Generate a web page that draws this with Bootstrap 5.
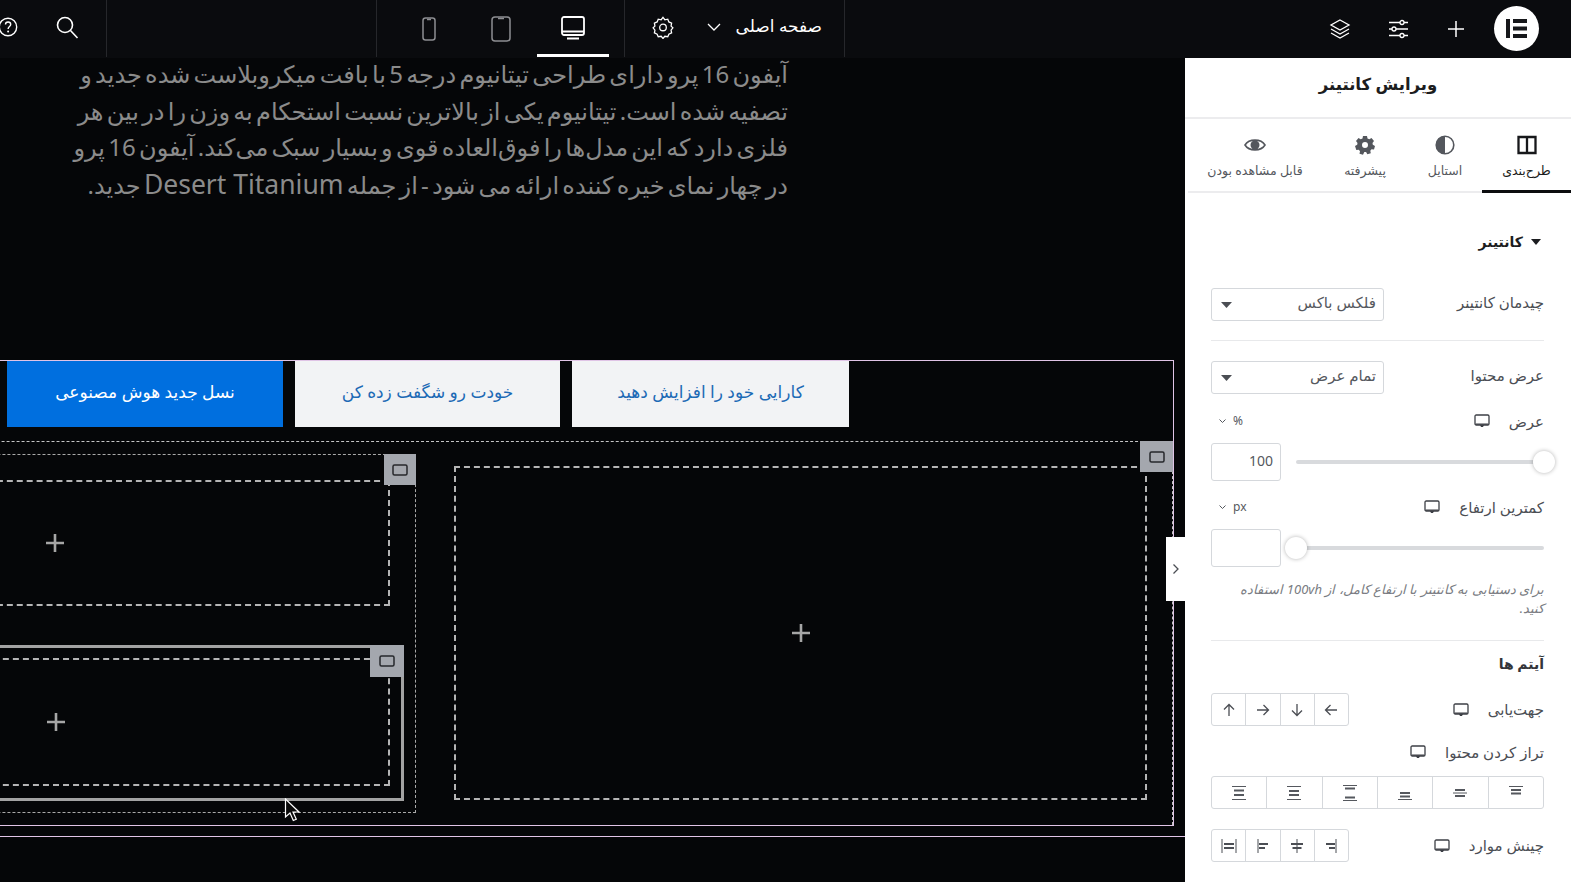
<!DOCTYPE html>
<html lang="fa">
<head>
<meta charset="UTF-8">
<title>ویرایش کانتینر</title>
<link href="https://cdn.jsdelivr.net/npm/bootstrap@5.3.0/dist/css/bootstrap.min.css" rel="stylesheet">
<style>
html, body { height: 882px; overflow: hidden; background: #050608; font-family: "Noto Sans", "DejaVu Sans", sans-serif; }
svg { display: block; }
.sym-defs { position: absolute; }
.top-bar { height: 58px; background: #0a0b0e; color: #fff; }
.top-cell { height: 57px; flex: none; border-right: 1px solid #26272b; }
.cell-tools { width: 107px; padding-bottom: 3px; }
.cell-help { margin-left: -2px; }
.cell-search { margin-left: 37px; }
.cell-gap { width: 270px; }
.cell-devices { width: 248px; padding-left: 16px; }
.cell-page { width: 220px; padding-right: 22px; padding-bottom: 3px; }
.cell-right { padding-right: 32px; padding-bottom: 1px; }
.icon-btn { flex: none; display: flex; align-items: center; justify-content: center; width: 72px; height: 57px; }
.icon-btn.is-on { border-bottom: 3px solid #fff; padding-top: 2px; }
.page-name { font-size: 17px; font-weight: 500; padding-bottom: 3px; }
.page-chev { margin-right: 15px; }
.page-gear { margin-right: 33px; }
.ico-sliders { margin-left: 37px; }
.ico-plus { margin-left: 38px; }
.logo-disc { width: 45px; height: 45px; margin-left: 29px; border-radius: 50%; background: #fff; }
.work-row { height: 824px; }
.canvas-area { position: relative; flex: 0 0 1185px; width: 1185px; overflow: hidden; background: #050608; }
.para-block { width: 788px; height: 304px; margin-top: -2px; color: #8b8b8b; font-size: 24px; line-height: 36.5px; word-spacing: -3px; text-align: right; white-space: nowrap; }
.latin-part { font-size: 26.5px; word-spacing: 0; }
.frame-wrap { margin-left: -299px; width: 1484px; padding-bottom: 10px; border-bottom: 1px solid #e0c4e6; }
.outer-frame { width: 1473px; height: 466px; border: 1px solid #e0c4e6; }
.btn-row { padding-left: 305px; height: 66px; gap: 12px; }
.cta { flex: none; height: 66px; padding-bottom: 10px; border: 0; border-radius: 0; font-size: 17px; background: #f2f3f5; color: #1c6ab5; }
.cta-blue { width: 276px; background: #006fdf; color: #fff; }
.cta-mid { width: 265px; }
.cta-end { width: 277px; }
.drop-row { position: relative; height: 384px; margin-top: 14px; border-top: 1px dashed #c5c5c5; border-right: 1px dashed #c5c5c5; }
.left-col { position: relative; flex: none; width: 714px; height: 359px; margin-top: 12px; padding: 25px 25px 0 16px; border: 1px dashed #a9a9a9; }
.drop-box { border: 2px dashed #b5b5b5; display: flex; align-items: center; justify-content: center; }
.box-a { height: 126px; }
.held-box { position: relative; height: 156px; margin-top: 39px; margin-right: -14px; margin-left: -14px; padding: 10px 11px 11px 14px; border: 3px solid #a3a3a3; border-left-color: transparent; }
.box-b { height: 128px; }
.box-main { flex: none; width: 693px; height: 334px; margin-top: 24px; margin-left: 38px; }
.grab { position: absolute; top: -1px; right: -1px; width: 32px; height: 31px; background: #a4a7ae; display: flex; align-items: center; justify-content: center; }
.grab-wide { width: 33px; }
.held-box .grab { top: -3px; right: -3px; height: 32px; width: 34px; }
.mouse-ptr { position: absolute; left: 284px; top: 740px; }
.side-tab { position: absolute; right: 0; top: 479px; width: 19px; height: 64px; background: #fff; display: flex; align-items: center; justify-content: center; }
.side-panel { flex: 0 0 386px; background: #fff; color: #4b4e54; font-size: 15px; }
.panel-head { height: 61px; padding-bottom: 6px; border-bottom: 2px solid #ececee; font-size: 16.5px; font-weight: 700; color: #1c1d20; }
.tab-row { height: 74px; margin-left: 3px; border-bottom: 2px solid #ececee; }
.tab-cell { height: 74px; display: flex; flex-direction: column; align-items: center; padding-top: 16px; font-size: 12.5px; color: #54575d; gap: 7px; }
.tab-cell.is-on { border-bottom: 3px solid #0c0d0f; color: #1c1d20; }
.tab-a { width: 89px; } .tab-b { width: 74px; } .tab-c { width: 86px; } .tab-d { width: 134px; }
.panel-body { padding: 0 27px 0 26px; }
.sec-title { height: 20px; line-height: 20px; margin-top: 39px; font-size: 14px; font-weight: 700; color: #1c1d20; gap: 8px; }
.caret-down { width: 0; height: 0; margin-right: 3px; border: 5px solid transparent; border-top: 6px solid #1c1d20; border-bottom: 0; }
.sel-box { width: 173px; height: 33px; padding: 0 7px 5px 24px; font-size: 15px; color: #55585e; border-radius: 3px; border-color: #d5d8dc; background-position: left 9px center; background-size: 11px 6px; background-image: url("data:image/svg+xml,%3Csvg xmlns='http://www.w3.org/2000/svg' viewBox='0 0 11 6'%3E%3Cpath fill='%234b4e54' d='M0 0h11L5.5 6z'/%3E%3C/svg%3E"); }
.field-row { height: 33px; }
.lift-text { padding-bottom: 5px; }
.with-mon { gap: 19px; }
.rule-line { border-top: 1px solid #e8e9eb; }
.mini-row { height: 20px; line-height: 20px; }
.unit-tag { margin-left: 8px; font-size: 12px; color: #55585e; gap: 7px; }
.slide-row { gap: 15px; }
.num-box { flex: none; width: 70px; height: 38px; padding: 0 7px 3px; border-radius: 3px; border-color: #d5d8dc; font-size: 14px; color: #55585e; }
.slide-track { position: relative; height: 4px; border-radius: 2px; background: #d8dadd; }
.slide-knob { position: absolute; top: -9px; width: 22px; height: 22px; border-radius: 50%; background: #fff; box-shadow: 0 0 4px rgba(0,0,0,.3); }
.knob-full { right: -11px; }
.knob-zero { left: -11px; }
.hint-text { height: 38px; margin-top: 13px; font-size: 13px; line-height: 19px; font-style: italic; color: #797c82; white-space: nowrap; }
.items-title { height: 20px; line-height: 20px; margin-top: 13px; font-size: 14px; font-weight: 700; color: #33353a; }
.seg-group { height: 33px; }
.seg-group .btn { display: flex; align-items: center; justify-content: center; padding: 0; background: #fff; border-color: #d5d8dc; --bs-btn-border-radius: 3px; }
.w-four { width: 138px; } .w-six { width: 333px; }
.mt-12 { margin-top: 12px; } .mt-14 { margin-top: 14px; } .mt-16 { margin-top: 16px; } .mt-17 { margin-top: 17px; } .mt-19 { margin-top: 19px; } .mt-20 { margin-top: 20px; } .mt-22 { margin-top: 22px; } .mt-36 { margin-top: 36px; }
</style>
</head>
<body>
<svg width="0" height="0" class="sym-defs">
  <symbol id="mon" viewBox="0 0 16 14"><path d="M2.2 1h11.6c.7 0 1.200.5 1.200 1.200v7.600c0 .7-.5 1.200-1.200 1.200H2.200C1.500 11 1 10.500 1 9.800V2.200C1 1.500 1.500 1 2.200 1z" fill="none" stroke="#3c3f45" stroke-width="1.300"/><path d="M1.500 9.500h13V10.800h-13zM6 11h4l-1 2H7z" fill="#3c3f45"/></symbol>
  <symbol id="plus" viewBox="0 0 18 18"><path d="M9 0v18M0 9h18" stroke="#a6a6a6" stroke-width="2.600"/></symbol>
  <symbol id="box-ico" viewBox="0 0 16 12"><rect x="1" y="1" width="14" height="10" rx="1.500" fill="none" stroke="#26282c" stroke-width="1.500"/></symbol>
</svg>

<div class="top-bar d-flex align-items-stretch">
  <div class="top-cell cell-tools d-flex align-items-center">
    <svg class="cell-help" width="20" height="22" viewBox="0 0 20 22"><circle cx="10" cy="11" r="8.700" fill="none" stroke="#fff" stroke-width="1.400"/><path d="M7.500 8.500c0-3.300 5.200-3.300 5.200 0 0 2.100-2.600 2-2.600 4.400" fill="none" stroke="#fff" stroke-width="1.400"/><circle cx="10.100" cy="15.500" r="1" fill="#fff"/></svg>
    <svg class="cell-search" width="24" height="24" viewBox="0 0 24 24"><circle cx="10" cy="10" r="7.500" fill="none" stroke="#fff" stroke-width="1.600"/><path d="M15.500 15.500l7 7.500" stroke="#fff" stroke-width="1.600"/></svg>
  </div>
  <div class="top-cell cell-gap"></div>
  <div class="top-cell cell-devices d-flex">
    <div class="icon-btn"><svg width="16" height="24" viewBox="0 0 16 24"><rect x="2" y="1" width="12" height="22" rx="2.500" fill="none" stroke="#8d8e92" stroke-width="1.500"/><path d="M6 2.500h4" stroke="#8d8e92" stroke-width="1.500"/></svg></div>
    <div class="icon-btn"><svg width="22" height="26" viewBox="0 0 22 26"><rect x="2" y="1" width="18" height="24" rx="3" fill="none" stroke="#8d8e92" stroke-width="1.500"/><path d="M8 2.500h6" stroke="#8d8e92" stroke-width="1.500"/></svg></div>
    <div class="icon-btn is-on"><svg width="24" height="24" viewBox="0 0 24 24"><rect x="1" y="1" width="22" height="18" rx="2" fill="none" stroke="#fff" stroke-width="1.800"/><path d="M1 15.500h22M6 22.500h12" stroke="#fff" stroke-width="1.800"/></svg></div>
  </div>
  <div class="top-cell cell-page d-flex align-items-center" dir="rtl">
    <span class="page-name">صفحه اصلی</span>
    <svg class="page-chev" width="14" height="8" viewBox="0 0 14 8"><path d="M1 1l6 6 6-6" fill="none" stroke="#fff" stroke-width="1.300"/></svg>
    <svg class="page-gear" width="22" height="24" viewBox="0 0 24 24"><path d="M12 1.500l2 2.600 3.200-.6 1.200 3 3 1.300-.6 3.200 2 2-2 2.500.6 3-3 1.300-1.200 2.800-3.200-.5-2 2.400-2-2.400-3.200.5-1.200-2.800-3-1.300.6-3-2-2.500 2-2-.6-3.200 3-1.300 1.200-3 3.200.6z" fill="none" stroke="#fff" stroke-width="1.400"/><circle cx="12" cy="12.500" r="3.600" fill="none" stroke="#fff" stroke-width="1.400"/></svg>
  </div>
  <div class="cell-right flex-grow-1 d-flex align-items-center justify-content-end">
    <svg width="22" height="22" viewBox="0 0 22 22"><path d="M11 2l9 5-9 5-9-5zM2 11l9 5 9-5M2 15l9 5 9-5" fill="none" stroke="#fff" stroke-width="1.300"/></svg>
    <svg class="ico-sliders" width="21" height="20" viewBox="0 0 21 20"><path d="M1 3.500h11M16 3.500h4M1 10h3M8 10h12M1 16.500h11M16 16.500h4" stroke="#fff" stroke-width="1.300" fill="none"/><circle cx="14" cy="3.500" r="2" fill="none" stroke="#fff" stroke-width="1.300"/><circle cx="6" cy="10" r="2" fill="none" stroke="#fff" stroke-width="1.300"/><circle cx="14" cy="16.500" r="2" fill="none" stroke="#fff" stroke-width="1.300"/></svg>
    <svg class="ico-plus" width="18" height="18" viewBox="0 0 18 18"><path d="M9 1v16M1 9h16" stroke="#fff" stroke-width="1.500"/></svg>
    <div class="logo-disc d-flex align-items-center justify-content-center">
      <svg width="21" height="19" viewBox="0 0 21 19"><path d="M0 0h4v19H0zM7 0h14v4H7zM7 7.500h14v4H7zM7 15h14v4H7z" fill="#17181b"/></svg>
    </div>
  </div>
</div>

<div class="work-row d-flex">
  <div class="canvas-area">
    <div class="para-block" dir="rtl">
      آیفون 16 پرو دارای طراحی تیتانیوم درجه 5 با بافت میکروبلاست شده جدید و<br>
      تصفیه شده است. تیتانیوم یکی از بالاترین نسبت استحکام به وزن را در بین هر<br>
      فلزی دارد که این مدل‌ها را فوق‌العاده قوی و بسیار سبک می‌کند. آیفون 16 پرو<br>
      در چهار نمای خیره کننده ارائه می شود - از جمله <span class="latin-part">Desert Titanium</span> جدید.
    </div>
    <div class="frame-wrap">
      <div class="outer-frame">
        <div class="btn-row d-flex">
          <button class="btn cta cta-blue">نسل جدید هوش مصنوعی</button>
          <button class="btn cta cta-mid">خودت رو شگفت زده کن</button>
          <button class="btn cta cta-end">کارایی خود را افزایش دهید</button>
        </div>
        <div class="drop-row d-flex align-items-start">
          <div class="left-col">
            <div class="drop-box box-a"><svg width="18" height="18"><use href="#plus"/></svg></div>
            <div class="grab"><svg width="16" height="12"><use href="#box-ico"/></svg></div>
            <div class="held-box">
              <div class="drop-box box-b"><svg width="18" height="18"><use href="#plus"/></svg></div>
              <div class="grab"><svg width="16" height="12"><use href="#box-ico"/></svg></div>
            </div>
          </div>
          <div class="drop-box box-main"><svg width="18" height="18"><use href="#plus"/></svg></div>
          <div class="grab grab-wide"><svg width="16" height="12"><use href="#box-ico"/></svg></div>
        </div>
      </div>
    </div>
    <svg class="mouse-ptr" width="17" height="24" viewBox="0 0 17 24"><path d="M1.500 1v18l4.500-4 3.300 7.500 3-1.300-3.300-7.200h6z" fill="#0a0a0a" stroke="#fff" stroke-width="1.200"/></svg>
    <div class="side-tab"><svg width="8" height="12" viewBox="0 0 8 12"><path d="M1.500 1.500L6 6l-4.500 4.500" fill="none" stroke="#4b4e54" stroke-width="1.300"/></svg></div>
  </div>

  <aside class="side-panel" dir="rtl">
    <div class="panel-head d-flex align-items-center justify-content-center">ویرایش کانتینر</div>
    <div class="tab-row d-flex">
      <div class="tab-cell tab-a is-on">
        <svg width="20" height="20" viewBox="0 0 20 20"><path d="M1.500 2h17v16h-17zM10 2v16" fill="none" stroke="#17181b" stroke-width="2.300"/></svg>
        <span>طرح‌بندی</span>
      </div>
      <div class="tab-cell tab-b">
        <svg width="20" height="20" viewBox="0 0 20 20"><circle cx="10" cy="10" r="8.800" fill="none" stroke="#54575d" stroke-width="1.600"/><path d="M10 1a9 9 0 0 0 0 18z" fill="#54575d"/></svg>
        <span>استایل</span>
      </div>
      <div class="tab-cell tab-c">
        <svg width="20" height="20" viewBox="0 0 20 20"><path fill="#54575d" fill-rule="evenodd" d="M8 1h4l.5 2.500 1.800.8L16.500 3 19 6l-1.500 2 .3 1.800L20 11l-1 3.500-2.500-.2-1.200 1.500.5 2.500-3.500 1-1.200-2.200H9.300L8 19.800l-3.500-1 .5-2.500-1.200-1.500-2.500.2L0 11l2.200-1.200L2.500 8 1 6l2.500-3 2.200 1.300 1.800-.8zM10 7a3 3 0 1 0 0 6 3 3 0 0 0 0-6z"/></svg>
        <span>پیشرفته</span>
      </div>
      <div class="tab-cell tab-d">
        <svg width="22" height="20" viewBox="0 0 22 20"><path d="M1 10c4-6.500 16-6.500 20 0-4 6.500-16 6.500-20 0z" fill="none" stroke="#54575d" stroke-width="1.600"/><circle cx="11" cy="10" r="4.500" fill="#54575d"/></svg>
        <span>قابل مشاهده بودن</span>
      </div>
    </div>

    <div class="panel-body">
      <div class="sec-title d-flex align-items-center"><span class="caret-down"></span><span>کانتینر</span></div>

      <div class="field-row d-flex align-items-center justify-content-between mt-36">
        <span class="lift-text">چیدمان کانتینر</span>
        <select class="form-select sel-box"><option>فلکس باکس</option></select>
      </div>
      <div class="rule-line mt-19"></div>

      <div class="field-row d-flex align-items-center justify-content-between mt-20">
        <span class="lift-text">عرض محتوا</span>
        <select class="form-select sel-box"><option>تمام عرض</option></select>
      </div>

      <div class="mini-row d-flex align-items-center justify-content-between mt-17">
        <span class="d-flex align-items-center with-mon">عرض <svg width="16" height="14"><use href="#mon"/></svg></span>
        <span class="unit-tag d-flex align-items-center"><span>%</span><svg width="7" height="5" viewBox="0 0 7 5"><path d="M.5.500l3 3 3-3" fill="none" stroke="#55585e"/></svg></span>
      </div>
      <div class="slide-row d-flex align-items-center mt-12">
        <div class="flex-grow-1"><div class="slide-track"><span class="slide-knob knob-full"></span></div></div>
        <input class="form-control num-box" value="100">
      </div>

      <div class="mini-row d-flex align-items-center justify-content-between mt-16">
        <span class="d-flex align-items-center with-mon">کمترین ارتفاع <svg width="16" height="14"><use href="#mon"/></svg></span>
        <span class="unit-tag d-flex align-items-center"><span>px</span><svg width="7" height="5" viewBox="0 0 7 5"><path d="M.5.500l3 3 3-3" fill="none" stroke="#55585e"/></svg></span>
      </div>
      <div class="slide-row d-flex align-items-center mt-12">
        <div class="flex-grow-1"><div class="slide-track"><span class="slide-knob knob-zero"></span></div></div>
        <input class="form-control num-box">
      </div>

      <div class="hint-text">برای دستیابی به کانتینر با ارتفاع کامل، از 100vh استفاده<br>کنید.</div>
      <div class="rule-line mt-22"></div>

      <div class="items-title">آیتم ها</div>

      <div class="field-row d-flex align-items-center justify-content-between mt-19">
        <span class="d-flex align-items-center with-mon">جهت‌یابی <svg width="16" height="14"><use href="#mon"/></svg></span>
        <div class="btn-group seg-group w-four" dir="ltr">
          <button class="btn"><svg width="14" height="14" viewBox="0 0 14 14"><path d="M7 13V1.500M2 6.500l5-5 5 5" fill="none" stroke="#4b4e54" stroke-width="1.300"/></svg></button>
          <button class="btn"><svg width="14" height="14" viewBox="0 0 14 14"><path d="M1 7h11.500M7.500 2l5 5-5 5" fill="none" stroke="#4b4e54" stroke-width="1.300"/></svg></button>
          <button class="btn"><svg width="14" height="14" viewBox="0 0 14 14"><path d="M7 1v11.500M2 7.500l5 5 5-5" fill="none" stroke="#4b4e54" stroke-width="1.300"/></svg></button>
          <button class="btn"><svg width="14" height="14" viewBox="0 0 14 14"><path d="M13 7H1.500M6.500 2l-5 5 5 5" fill="none" stroke="#4b4e54" stroke-width="1.300"/></svg></button>
        </div>
      </div>

      <div class="mini-row d-flex align-items-center mt-16">
        <span class="d-flex align-items-center with-mon">تراز کردن محتوا <svg width="16" height="14"><use href="#mon"/></svg></span>
      </div>
      <div class="btn-group seg-group w-six mt-14 d-flex" dir="ltr">
        <button class="btn flex-fill"><svg width="16" height="16" viewBox="0 0 16 16"><path d="M1 1.500h14M1 14.500h14" stroke="#55585e"/><path d="M3 5.500h10M3 10h10" stroke="#55585e" stroke-width="2"/></svg></button>
        <button class="btn flex-fill"><svg width="16" height="16" viewBox="0 0 16 16"><path d="M1 1.500h14M1 14.500h14" stroke="#55585e"/><path d="M3 6h10M3 10h10" stroke="#55585e" stroke-width="2"/></svg></button>
        <button class="btn flex-fill"><svg width="16" height="16" viewBox="0 0 16 16"><path d="M1 .5h14M1 15.500h14" stroke="#55585e"/><path d="M3 3.500h10M3 12.500h10" stroke="#55585e" stroke-width="2"/></svg></button>
        <button class="btn flex-fill"><svg width="16" height="16" viewBox="0 0 16 16"><path d="M1 14.500h14" stroke="#55585e"/><path d="M3 8h10M3 11.500h10" stroke="#55585e" stroke-width="2"/></svg></button>
        <button class="btn flex-fill"><svg width="16" height="16" viewBox="0 0 16 16"><path d="M1 8h14" stroke="#55585e"/><path d="M3 5h10M3 11h10" stroke="#55585e" stroke-width="2"/></svg></button>
        <button class="btn flex-fill"><svg width="16" height="16" viewBox="0 0 16 16"><path d="M1 1.500h14" stroke="#55585e"/><path d="M3 5h10M3 8.500h10" stroke="#55585e" stroke-width="2"/></svg></button>
      </div>

      <div class="field-row d-flex align-items-center justify-content-between mt-20">
        <span class="d-flex align-items-center with-mon">چینش موارد <svg width="16" height="14"><use href="#mon"/></svg></span>
        <div class="btn-group seg-group w-four" dir="ltr">
          <button class="btn"><svg width="16" height="16" viewBox="0 0 16 16"><path d="M1 1v14M15 1v14" stroke="#4b4e54"/><path d="M3 6h10M3 10h10" stroke="#4b4e54" stroke-width="2"/></svg></button>
          <button class="btn"><svg width="16" height="16" viewBox="0 0 16 16"><path d="M3 1v14" stroke="#4b4e54"/><path d="M4 6h9M4 10h6" stroke="#4b4e54" stroke-width="2"/></svg></button>
          <button class="btn"><svg width="16" height="16" viewBox="0 0 16 16"><path d="M8 1v14" stroke="#4b4e54"/><path d="M2 6h12M3.500 10h9" stroke="#4b4e54" stroke-width="2"/></svg></button>
          <button class="btn"><svg width="16" height="16" viewBox="0 0 16 16"><path d="M13 1v14" stroke="#4b4e54"/><path d="M3 6h9M6 10h6" stroke="#4b4e54" stroke-width="2"/></svg></button>
        </div>
      </div>
    </div>
  </aside>
</div>
<script src="https://cdn.jsdelivr.net/npm/bootstrap@5.3.0/dist/js/bootstrap.bundle.min.js"></script>
</body>
</html>
